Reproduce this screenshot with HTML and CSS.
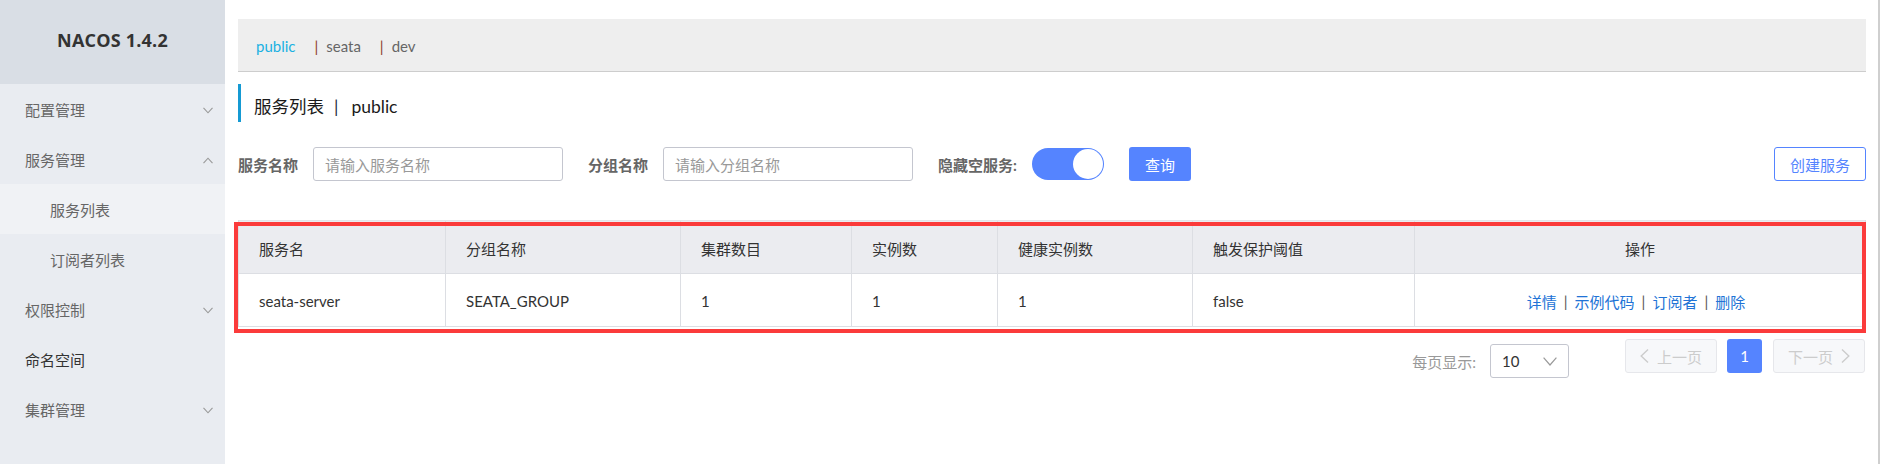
FILE: index.html
```html
<!DOCTYPE html>
<html lang="zh-CN">
<head>
<meta charset="utf-8">
<title>Nacos - 服务列表</title>
<link rel="stylesheet" href="styles.css">
</head>
<body>
<div class="app">
  <aside class="sidebar">
    <div class="brand">NACOS 1.4.2</div>
    <ul class="menu">
      <li class="menu-item"><span>配置管理</span><svg class="chev" width="10" height="7" viewBox="0 0 10 7"><polyline points="0.5,0.8 5,5.8 9.5,0.8"/></svg></li>
      <li class="menu-item"><span>服务管理</span><svg class="chev" width="10" height="7" viewBox="0 0 10 7"><polyline points="0.5,6.2 5,1.2 9.5,6.2"/></svg></li>
      <li class="sub-item active">服务列表</li>
      <li class="sub-item">订阅者列表</li>
      <li class="menu-item"><span>权限控制</span><svg class="chev" width="10" height="7" viewBox="0 0 10 7"><polyline points="0.5,0.8 5,5.8 9.5,0.8"/></svg></li>
      <li class="menu-item plain"><span>命名空间</span></li>
      <li class="menu-item"><span>集群管理</span><svg class="chev" width="10" height="7" viewBox="0 0 10 7"><polyline points="0.5,0.8 5,5.8 9.5,0.8"/></svg></li>
    </ul>
  </aside>

  <main class="main">
    <div class="ns-bar">
      <span class="ns active">public</span>
      <span class="ns-sep">|</span><span class="ns">seata</span>
      <span class="ns-sep">|</span><span class="ns">dev</span>
    </div>

    <div class="page-title">服务列表<span class="title-sep">|</span>public</div>

    <div class="filters">
      <span class="label">服务名称</span>
      <div class="input">请输入服务名称</div>
      <span class="label gap">分组名称</span>
      <div class="input">请输入分组名称</div>
      <span class="label gap">隐藏空服务:</span>
      <div class="switch"><span class="knob"></span></div>
      <div class="btn-primary">查询</div>
      <div class="btn-outline">创建服务</div>
    </div>

    <div class="table-wrap">
      <div class="t-head">
        <div class="cell">服务名</div>
        <div class="cell">分组名称</div>
        <div class="cell">集群数目</div>
        <div class="cell">实例数</div>
        <div class="cell">健康实例数</div>
        <div class="cell">触发保护阈值</div>
        <div class="cell center last">操作</div>
      </div>
      <div class="t-row">
        <div class="cell">seata-server</div>
        <div class="cell">SEATA_GROUP</div>
        <div class="cell">1</div>
        <div class="cell">1</div>
        <div class="cell">1</div>
        <div class="cell">false</div>
        <div class="cell center last ops">
          <a class="link">详情</a><span class="op-sep">|</span><a class="link">示例代码</a><span class="op-sep">|</span><a class="link">订阅者</a><span class="op-sep">|</span><a class="link">删除</a>
        </div>
      </div>
      <div class="highlight"></div>
    </div>

    <div class="pager">
      <div class="page-size">
        <span>每页显示:</span>
        <div class="select"><span>10</span><svg class="sel-chev" width="14" height="9" viewBox="0 0 14 9"><polyline points="0.6,0.6 7,8 13.4,0.6"/></svg></div>
      </div>
      <div class="pager-btn prev"><svg class="pg-chev" width="9" height="14" viewBox="0 0 9 14"><polyline points="8,0.6 1.2,7 8,13.4"/></svg><span>上一页</span></div>
      <div class="page-num">1</div>
      <div class="pager-btn next"><span>下一页</span><svg class="pg-chev" width="9" height="14" viewBox="0 0 9 14"><polyline points="1,0.6 7.8,7 1,13.4"/></svg></div>
    </div>
  </main>

  <div class="vline"></div>
</div>
</body>
</html>
```

FILE: styles.css
```css
* {
  box-sizing: border-box;
  margin: 0;
  padding: 0;
}

html, body {
  height: 100%;
}

body {
  font-family: Lato, "Noto Sans CJK SC", sans-serif;
  font-size: 15px;
  color: #333;
  background: #fff;
  overflow: hidden;
}

.app {
  display: flex;
  height: 464px;
}

/* Sidebar */
.sidebar {
  width: 225px;
  flex: none;
  background: #e9ecf1;
}

.brand {
  height: 84px;
  background: #d9dee5;
  text-align: center;
  line-height: 80px;
  font-family: "Open Sans", "Noto Sans CJK SC", sans-serif;
  font-size: 18px;
  font-weight: 700;
  letter-spacing: 0.2px;
  color: #333;
}

.menu {
  list-style: none;
}

.menu-item {
  height: 50px;
  padding: 3px 12px 0 25px;
  display: flex;
  align-items: center;
  justify-content: space-between;
  line-height: 47px;
  color: #666;
}

.menu-item.plain {
  color: #333;
}

.sub-item {
  height: 50px;
  padding: 3px 0 0 50px;
  line-height: 47px;
  color: #666;
}

.sub-item.active {
  background: #f0f2f5;
}

.chev polyline {
  fill: none;
  stroke: #999;
  stroke-width: 1.1;
}

/* Main */
.main {
  flex: 1;
  min-width: 0;
  padding: 19px 12px 0 13px;
}

.vline {
  width: 2px;
  flex: none;
  background: #cfcfcf;
  margin-right: 3px;
}

.ns-bar {
  height: 53px;
  background: #eee;
  border-bottom: 1px solid #cdcdcd;
  display: flex;
  align-items: center;
  padding: 2px 0 0 18px;
  color: #666;
}

.ns.active {
  color: #1ab1e2;
}

.ns-sep {
  color: #8b3c2c;
  margin: 0 8px 0 19px;
}

.page-title {
  margin-top: 12px;
  height: 38px;
  border-left: 3px solid #159ad3;
  padding: 9px 0 0 13px;
  line-height: 28px;
  font-size: 17.5px;
  color: #1a1a1a;
}

.title-sep {
  margin: 0 13px 0 10px;
  color: #1a2440;
}

/* Filters */
.filters {
  margin-top: 25px;
  height: 34px;
  display: flex;
  align-items: center;
}

.label {
  font-weight: 700;
  color: #666;
}

.label.gap {
  margin-left: 25px;
}

.input {
  width: 250px;
  height: 34px;
  margin-left: 15px;
  padding-left: 11px;
  border: 1px solid #c4c6cf;
  border-radius: 3px;
  display: flex;
  align-items: center;
  color: #999;
}

.switch {
  position: relative;
  width: 72px;
  height: 32px;
  margin-left: 15px;
  border-radius: 16px;
  background: #5584ff;
}

.knob {
  position: absolute;
  right: 1px;
  top: 1px;
  width: 30px;
  height: 30px;
  border-radius: 50%;
  background: #fff;
}

.btn-primary {
  margin-left: 25px;
  width: 62px;
  height: 34px;
  border-radius: 3px;
  background: #5584ff;
  color: #fff;
  display: flex;
  align-items: center;
  justify-content: center;
}

.btn-outline {
  margin-left: auto;
  width: 92px;
  height: 34px;
  border: 1px solid #5584ff;
  border-radius: 3px;
  color: #5584ff;
  display: flex;
  align-items: center;
  justify-content: center;
}

/* Table */
.table-wrap {
  position: relative;
  margin-top: 39px;
  border-left: 1px solid #dcdee3;
  border-right: 1px solid #dcdee3;
}

.t-head,
.t-row {
  display: grid;
  grid-template-columns: 207px 235px 171px 146px 195px 222px 1fr;
}

.t-head {
  height: 54px;
  background: #ebecf0;
  border-top: 1px solid #e3e4e8;
  border-bottom: 1px solid #dcdee3;
}

.t-row {
  height: 53px;
  border-bottom: 1px solid #dcdee3;
}

.cell {
  display: flex;
  align-items: center;
  padding: 2px 0 0 20px;
  border-right: 1px solid #dcdee3;
  color: #333;
  white-space: nowrap;
}

.cell.last {
  border-right: none;
}

.cell.center {
  justify-content: center;
  padding-left: 0;
}

.cell.ops {
  padding-right: 8px;
}

.link {
  color: #2173d6;
  text-decoration: none;
}

.op-sep {
  margin: 0 7px;
  color: #555;
}

.highlight {
  position: absolute;
  left: -5px;
  right: -1px;
  top: 2px;
  height: 111px;
  border: 4px solid #fb3b3b;
  pointer-events: none;
}

/* Pager */
.pager {
  margin-top: 12px;
  display: flex;
  justify-content: flex-end;
  align-items: flex-start;
  padding-right: 1px;
}

.page-size {
  margin-top: 5px;
  display: flex;
  align-items: center;
  color: #999;
}

.select {
  margin-left: 14px;
  width: 79px;
  height: 34px;
  padding: 0 11px;
  border: 1px solid #c4c6cf;
  border-radius: 3px;
  display: flex;
  align-items: center;
  justify-content: space-between;
  color: #333;
}

.sel-chev polyline {
  fill: none;
  stroke: #999;
  stroke-width: 1.2;
}

.pager-btn {
  width: 92px;
  height: 34px;
  border: 1px solid #e6e7eb;
  border-radius: 3px;
  background: #f7f8fa;
  color: #ccc;
  display: flex;
  align-items: center;
  justify-content: center;
  gap: 8px;
}

.pager-btn.prev {
  margin-left: 56px;
}

.pager-btn.next {
  margin-left: 11px;
}

.pg-chev polyline {
  fill: none;
  stroke: #ccc;
  stroke-width: 1.4;
}

.page-num {
  margin-left: 10px;
  width: 35px;
  height: 34px;
  border-radius: 3px;
  background: #5584ff;
  color: #fff;
  display: flex;
  align-items: center;
  justify-content: center;
}
```
